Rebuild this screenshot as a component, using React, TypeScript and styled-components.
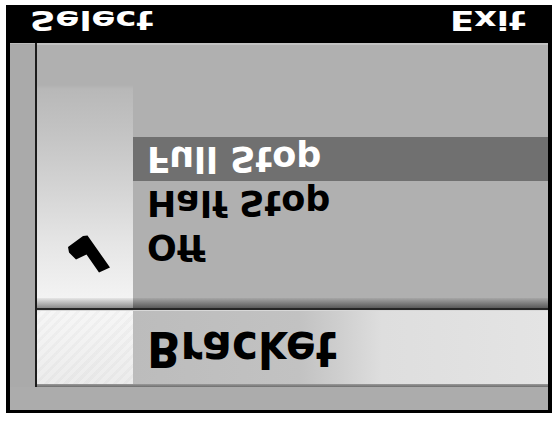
import React from "react";
import styled, { createGlobalStyle } from "styled-components";

const Global = createGlobalStyle`
  html, body { margin: 0; padding: 0; background: #ffffff; }
  body { padding: 5px 0 0 6px; font-family: "DejaVu Sans", "Liberation Sans", sans-serif; }
`;

const Frame = styled.div`
  width: 546px;
  height: 408px;
  box-sizing: border-box;
  background: #000;
  padding: 0 4px 3px 4px;
  display: flex;
  flex-direction: column;
`;

const TitleBar = styled.div`
  height: 38px;
  flex: none;
  display: flex;
  justify-content: space-between;
  align-items: flex-start;
  padding: 0 22px 0 20px;
`;

const TitleText = styled.span<{ $align: "left" | "right" }>`
  display: inline-block;
  color: #fff;
  font-weight: bold;
  font-size: 26px;
  line-height: 30px;
  padding-top: 1px;
  transform: scale(1.36, -1);
  transform-origin: ${(p) => (p.$align === "left" ? "left center" : "right center")};
`;

const Panel = styled.div`
  flex: 1;
  background: #acacac;
  display: flex;
  flex-direction: column;
`;

const Body = styled.div`
  height: 344px;
  display: flex;
`;

const LeftStrip = styled.div`
  width: 25px;
  background: #aaaaaa;
  border-top: 1px solid #bcbcbc;
  box-sizing: border-box;
`;

const Divider = styled.div`
  width: 2px;
  background: #1c1c1c;
`;

const Content = styled.div`
  flex: 1;
  display: flex;
  flex-direction: column;
`;

const MenuArea = styled.div`
  height: 255px;
  box-sizing: border-box;
  padding-top: 92px;
  border-top: 2px solid #c2c2c2;
  background:
    linear-gradient(to bottom, #b0b0b0 0px, #b0b0b0 40px, #b8b8b8 44px, #c4c4c4 90px, #d6d6d6 150px, #e6e6e6 200px, #f3f3f3 253px) left top / 96px 100% no-repeat,
    #b0b0b0;
  display: flex;
  flex-direction: column;
`;

const Row = styled.div`
  height: 44px;
  display: grid;
  grid-template-columns: 96px 1fr;
`;

const IconCell = styled.div`
  position: relative;
`;

const LabelCell = styled.div<{ $selected?: boolean }>`
  background: ${(p) => (p.$selected ? "#707070" : "transparent")};
  padding-left: 14px;
  display: flex;
  align-items: flex-start;
`;

const Label = styled.span<{ $selected?: boolean }>`
  display: inline-block;
  color: ${(p) => (p.$selected ? "#ffffff" : "#000000")};
  font-weight: bold;
  font-size: 35px;
  line-height: 44px;
  white-space: pre;
  transform: scaleY(-1);
`;

const Shadow = styled.div`
  height: 10px;
  background:
    linear-gradient(to bottom, #e6e6e6, #8c8c8c) left top / 96px 100% no-repeat,
    linear-gradient(to bottom, #a6a6a6, #5a5a5a);
`;

const Rule = styled.div`
  height: 2px;
  background: #262626;
`;

const BracketRow = styled.div`
  height: 74px;
  display: grid;
  grid-template-columns: 96px 1fr;
  border-top: 1px solid #d8d8d8;
  box-sizing: border-box;
`;

const BracketIcon = styled.div`
  background:
    repeating-linear-gradient(135deg, rgba(0,0,0,0.025) 0 3px, rgba(255,255,255,0) 3px 7px),
    linear-gradient(to bottom, #f6f6f6, #ececec);
`;

const BracketLabelCell = styled.div`
  background: linear-gradient(to right, #bcbcbc 0%, #c2c2c2 40%, #cfcfcf 50%, #dedede 60%, #e4e4e4 100%);
  padding-left: 14px;
  padding-top: 3px;
  display: flex;
  align-items: flex-start;
`;

const BracketLabel = styled.span`
  display: inline-block;
  color: #000;
  font-weight: bold;
  font-size: 44px;
  line-height: 70px;
  transform: scale(1, -1.15);
`;

const BottomLine = styled.div`
  height: 3px;
  background: linear-gradient(to bottom, #9a9a9a, #6e6e6e);
`;

const Footer = styled.div`
  flex: 1;
  background: #acacac;
`;

const Check = styled.svg`
  position: absolute;
  left: 0;
  top: 0;
  overflow: visible;
`;

const items = [
  { label: "Full Stop", selected: true, checked: false },
  { label: "Half Stop", selected: false, checked: false },
  { label: "Off", selected: false, checked: true },
];

export default function App() {
  return (
    <>
      <Global />
      <Frame>
        <TitleBar>
          <TitleText $align="left">Select</TitleText>
          <TitleText $align="right">Exit</TitleText>
        </TitleBar>
        <Panel>
          <Body>
            <LeftStrip />
            <Divider />
            <Content>
              <MenuArea>
                {items.map((it) => (
                  <Row key={it.label}>
                    <IconCell>
                      {it.checked && (
                        <Check width="96" height="44" viewBox="0 0 96 44">
                          <polygon
                            points="31,22 46,11 50.5,10.5 73,42.5 62,47.5 49.5,29.5 39,34.5 32,27.5"
                            fill="#000"
                          />
                        </Check>
                      )}
                    </IconCell>
                    <LabelCell $selected={it.selected}>
                      <Label $selected={it.selected}>{it.label}</Label>
                    </LabelCell>
                  </Row>
                ))}
              </MenuArea>
              <Shadow />
              <Rule />
              <BracketRow>
                <BracketIcon />
                <BracketLabelCell>
                  <BracketLabel>Bracket</BracketLabel>
                </BracketLabelCell>
              </BracketRow>
              <BottomLine />
            </Content>
          </Body>
          <Footer />
        </Panel>
      </Frame>
    </>
  );
}
